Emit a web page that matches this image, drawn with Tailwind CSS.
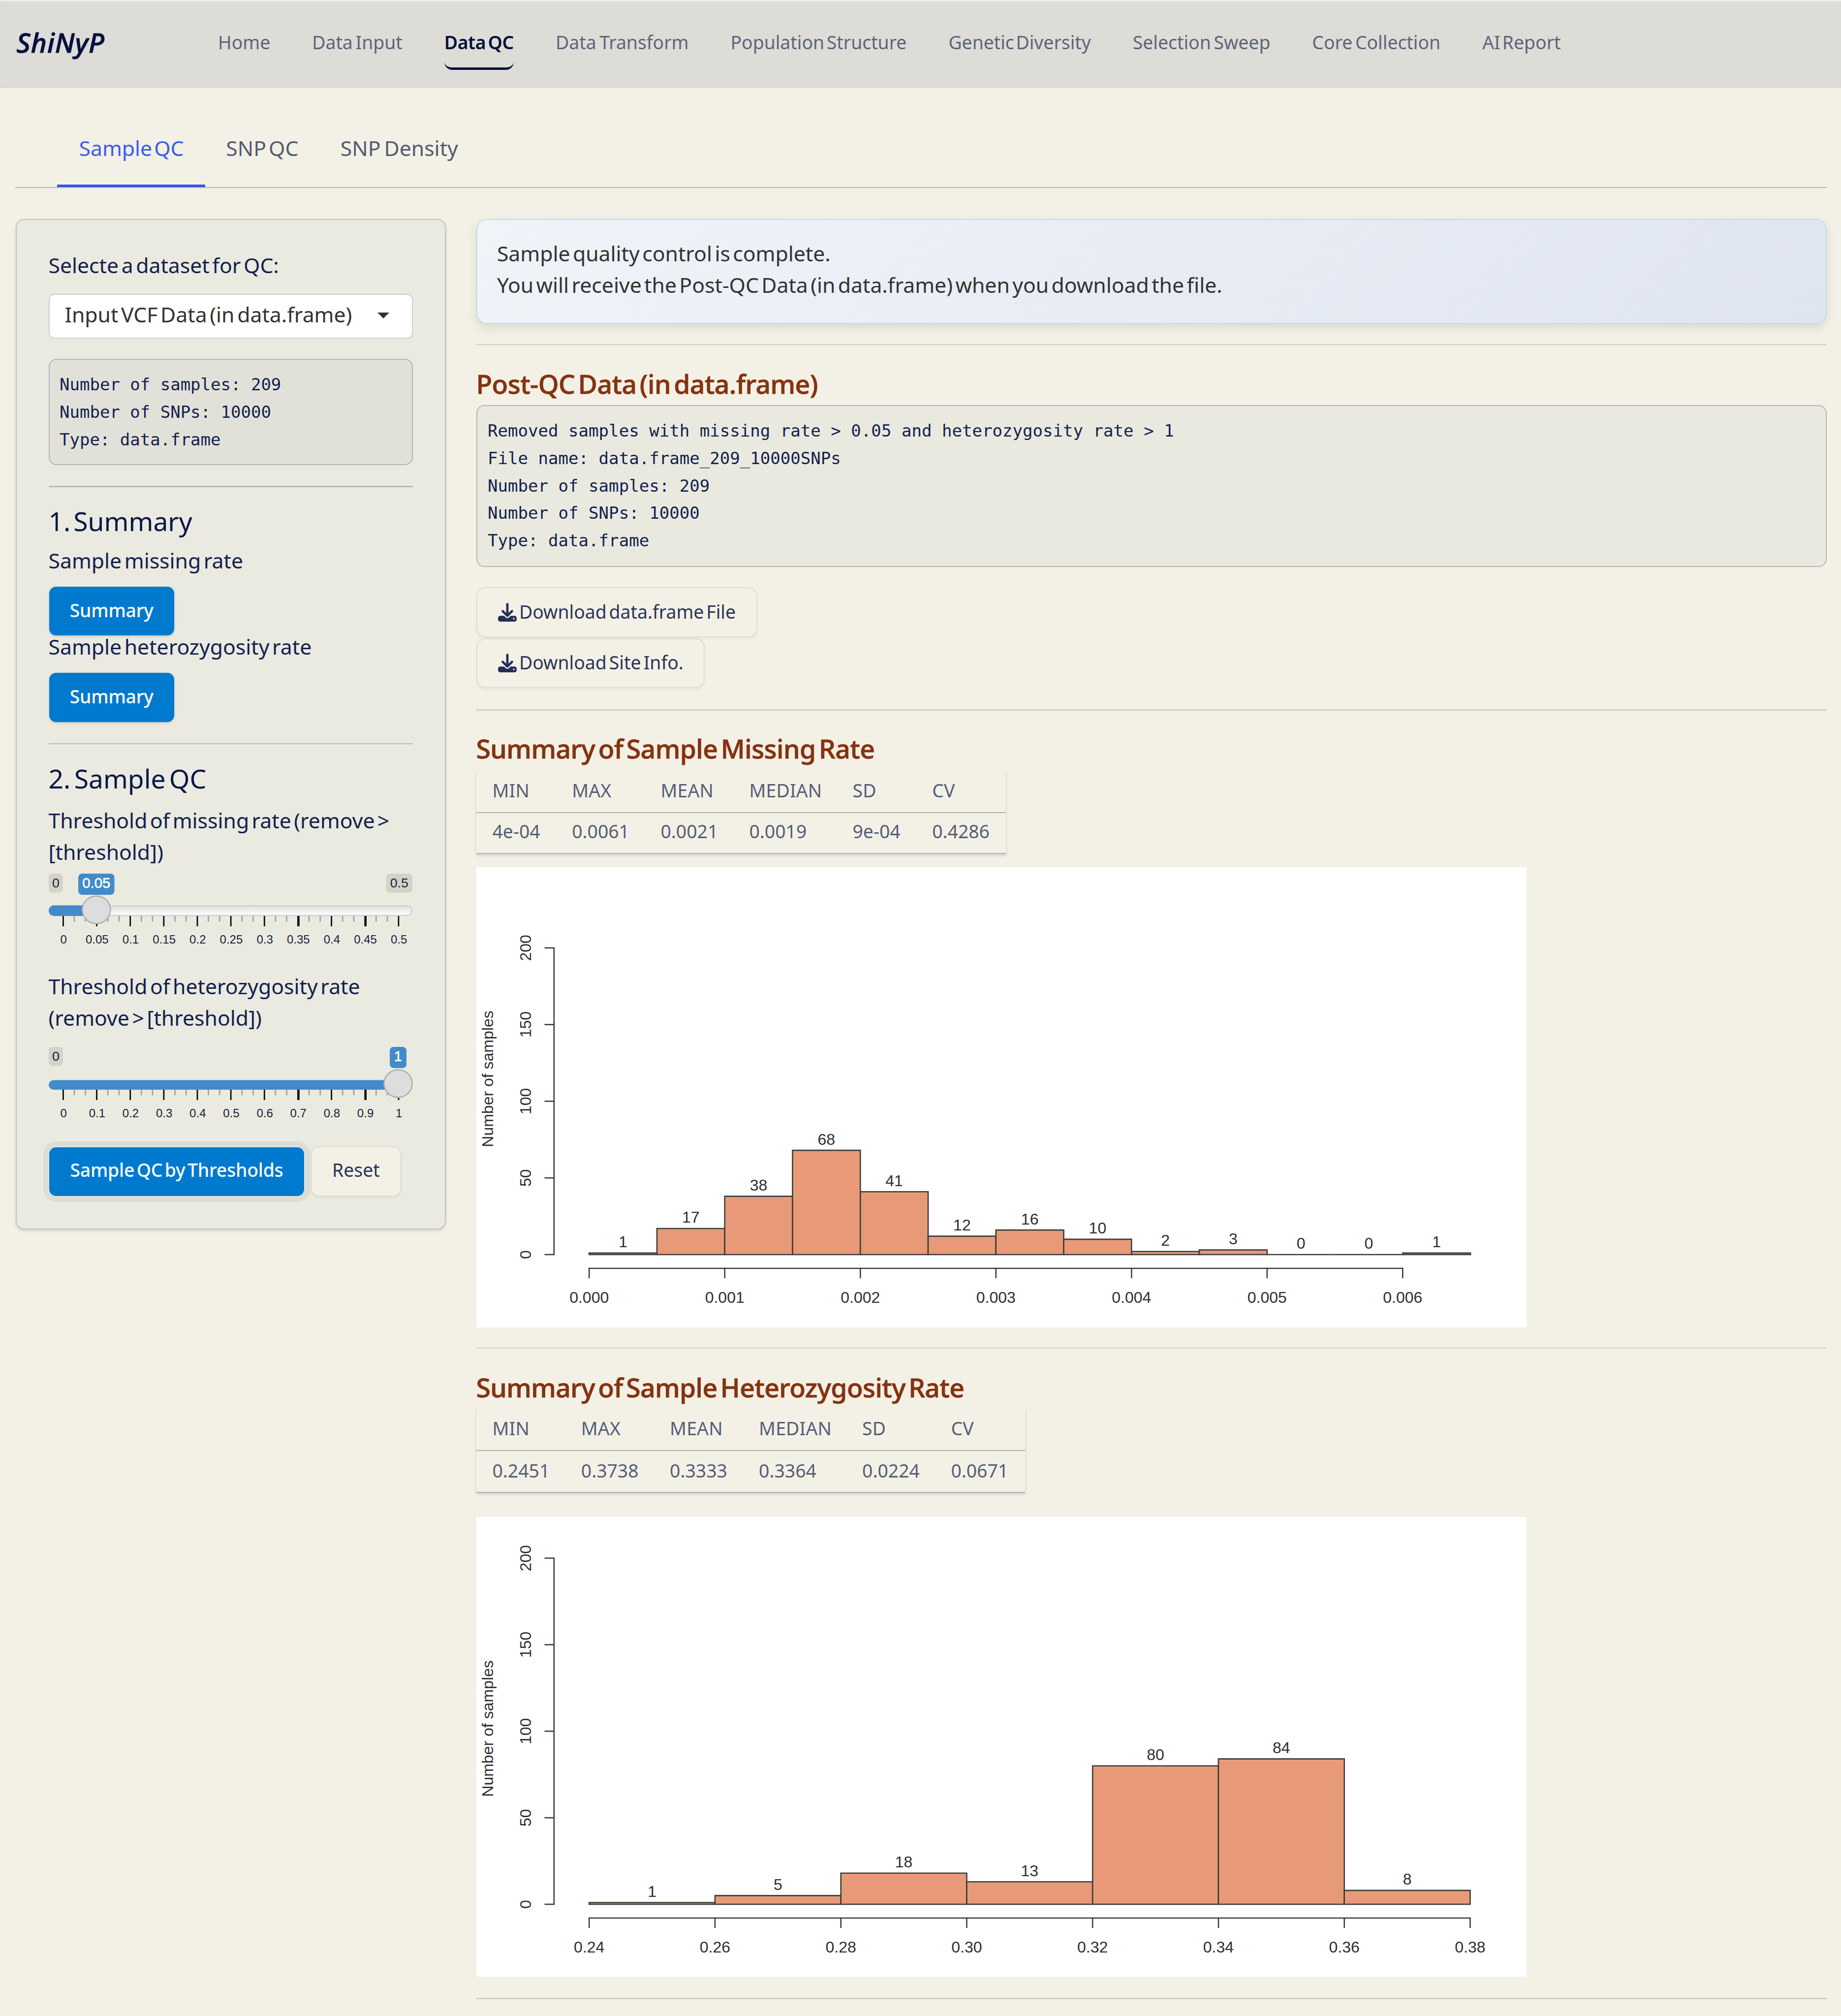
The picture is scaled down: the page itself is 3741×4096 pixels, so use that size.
<!DOCTYPE html>
<html lang="en">
<head>
<meta charset="utf-8">
<title>ShiNyP</title>
<script src="https://cdn.jsdelivr.net/npm/@tailwindcss/browser@4"></script>
</head>
<body class="w-[3741px] h-[4096px] overflow-hidden bg-[#f3f1e6] text-[#14214f] text-[42.7px] leading-[64px] font-['Noto_Sans',sans-serif]">

<header class="flex h-[179px] border-t-[3px] border-[#e8ebf1] bg-[#dddcd6] pl-[33.5px] shadow-[inset_0_-2px_2px_#d8d7d1]">
  <div class="mt-[50.5px] w-[409.5px] text-[55px] italic font-medium tracking-[1px] text-[#04103f] [-webkit-text-stroke:1px]">ShiNyP</div>
  <nav class="mt-[55px] flex items-start gap-[85px] text-[37.35px] leading-[56px] text-[#5d657b] whitespace-nowrap">
    <a>Home</a>
    <a class="[word-spacing:-4px]">Data Input</a>
    <a class="h-[84px] rounded-[16px] border-b-[5.3px] border-[#04103f] font-semibold tracking-[-0.4px] text-[#04103f] [word-spacing:-5px]">Data QC</a>
    <a class="[word-spacing:-3px]">Data Transform</a>
    <a class="[word-spacing:-5px]">Population Structure</a>
    <a class="[word-spacing:-6px]">Genetic Diversity</a>
    <a class="[word-spacing:-4px]">Selection Sweep</a>
    <a class="[word-spacing:-4px]">Core Collection</a>
    <a class="[word-spacing:-5.5px]">AI Report</a>
  </nav>
</header>

<main class="pl-[31px] pr-[29px]">
  <div class="flex pt-[90px] pl-[85px] border-b-[2.67px] border-[#b4b5b9] text-[#535b70] whitespace-nowrap">
    <a class="pl-[44.5px] pr-[43px] pb-[42px] border-b-[5.3px] border-[#2f55e8] text-[#3c5cec] [word-spacing:-7px]">Sample QC</a>
    <a class="px-[42.7px] [word-spacing:-6px]">SNP QC</a>
    <a class="px-[42.7px] [word-spacing:-4px]">SNP Density</a>
  </div>

  <div class="mt-[62.8px] flex items-start gap-[62px] pl-px">
    <aside class="h-[2053px] w-[873.5px] shrink-0 rounded-[17px] border-[2.67px] border-[#c4c5c1] bg-[#eaeae0] px-[64.5px] pt-[60.5px] shadow-[0_3px_6px_rgba(0,0,0,0.12)] whitespace-nowrap">
      <div class="[word-spacing:-5.5px]">Selecte a dataset for QC:</div>
      <div class="mt-[26px] flex h-[91px] items-center justify-between rounded-[11px] border-[2.67px] border-[#cfd0cc] bg-white pr-[46px] pb-[7px] pl-[31px] text-[#333333]">
        <span class="[word-spacing:-5.4px]">Input VCF Data (in data.frame)</span>
        <svg class="mt-[3px] h-[12px] w-[24px]" viewBox="0 0 24 12"><path d="M0 0h24L12 12z" fill="#333"/></svg>
      </div>
      <pre class="mt-[41px] h-[216px] rounded-[16px] border-[2.67px] border-[#b4b5b9] bg-[#e2e1d9] pt-[22px] pl-[20.5px] text-[34px] leading-[56px] font-['DejaVu_Sans_Mono',monospace]">Number of samples: 209
Number of SNPs: 10000
Type: data.frame</pre>
      <div class="mt-[42px] h-[2.67px] bg-[#b9babb]"></div>
      <div class="mt-[37px] text-[53.4px] text-[#0b1746] [word-spacing:-8px]">1. Summary</div>
      <div class="mt-[16px] [word-spacing:-5.5px]">Sample missing rate</div>
      <div class="mt-[21px] ml-[1.5px] flex h-[99.3px] w-[253.5px] items-center justify-center rounded-[14px] bg-[#007acf] pb-[4px] text-[37.35px] font-medium tracking-[-0.2px] text-white shadow-[0_2px_5px_rgba(0,0,0,0.15)]">Summary</div>
      <div class="-mt-[9.4px] [word-spacing:-5.5px]">Sample heterozygosity rate</div>
      <div class="mt-[21.6px] ml-[1.5px] flex h-[99.3px] w-[253.5px] items-center justify-center rounded-[14px] bg-[#007acf] pb-[4px] text-[37.35px] font-medium tracking-[-0.2px] text-white shadow-[0_2px_5px_rgba(0,0,0,0.15)]">Summary</div>
      <div class="mt-[43px] h-[2.67px] bg-[#b9babb]"></div>
      <div class="mt-[38px] text-[53.4px] text-[#0b1746] [word-spacing:-6.6px]">2. Sample QC</div>
      <div class="mt-[21px] [word-spacing:-5.7px]">Threshold of missing rate (remove &gt;<br>[threshold])</div>
      <svg id="s1" class="mt-[11.8px] block h-[160px] w-[739px] overflow-visible" viewBox="0 0 739 160"></svg>
      <div class="mt-[37px] [word-spacing:-5.5px]">Threshold of heterozygosity rate<br>(remove &gt; [threshold])</div>
      <svg id="s2" class="mt-[26.6px] block h-[160px] w-[739px] overflow-visible" viewBox="0 0 739 160"></svg>
      <div class="mt-[42.7px] ml-[1.5px] flex items-center gap-[13.6px] text-[37.35px]">
        <div class="flex h-[99px] w-[518px] items-center justify-center rounded-[14px] bg-[#007acf] pb-[6px] font-medium text-white shadow-[0_0_0_1.5px_#e9e9e2,0_0_0_12px_#dcddd6] tracking-[-0.2px] [word-spacing:-5px]">Sample QC by Thresholds</div>
        <div class="flex h-[101.5px] w-[183.5px] items-center justify-center rounded-[16px] border-[2.67px] border-[#dfded3] bg-[#f3f1e6] pb-[6px] text-[#2b3558] shadow-[0_3px_5px_rgba(0,0,0,0.05)]">Reset</div>
      </div>
    </aside>

    <section class="flex-1 whitespace-nowrap">
      <div class="h-[213px] rounded-[21px] border-[2.67px] border-[#cbd9e6] bg-linear-135 from-[#f0f4f9] to-[#dfe5f0] pt-[36.5px] pl-[40.4px] text-[#333333] shadow-[0_8px_20px_rgba(0,0,0,0.1)]">
        <div class="[word-spacing:-5.65px]">Sample quality control is complete.</div>
        <div class="[word-spacing:-5.7px]">You will receive the Post-QC Data (in data.frame) when you download the file.</div>
      </div>
      <div class="mt-[41px] h-[2.67px] bg-[#cfd0c9]"></div>
      <h2 class="mt-[47px] text-[53.4px] font-medium tracking-[-0.5px] text-[#853311] [word-spacing:-7px] [-webkit-text-stroke:0.9px]">Post-QC Data (in data.frame)</h2>
      <pre class="mt-[11px] h-[329px] rounded-[16px] border-[2.67px] border-[#b4b5b9] bg-[#e9e9df] pt-[22.5px] pl-[21.5px] text-[34px] leading-[55.8px] tracking-[0.04px] font-['DejaVu_Sans_Mono',monospace]">Removed samples with missing rate &gt; 0.05 and heterozygosity rate &gt; 1
File name: data.frame_209_10000SNPs
Number of samples: 209
Number of SNPs: 10000
Type: data.frame</pre>
      <div class="mt-[41px] flex h-[102px] w-[571.5px] items-center gap-[5px] rounded-[18px] border-[2.67px] border-[#dfded3] pb-[3px] pl-[42.5px] text-[37.35px] text-[#2b3558] shadow-[0_3px_5px_rgba(0,0,0,0.05)]">
        <svg class="mt-[2px] h-[38px] w-[38px]" viewBox="0 0 512 512" fill="#232e59"><path d="M288 32c0-17.7-14.3-32-32-32s-32 14.3-32 32V274.7l-73.4-73.4c-12.5-12.5-32.8-12.5-45.3 0s-12.5 32.8 0 45.3l128 128c12.5 12.5 32.8 12.5 45.3 0l128-128c12.5-12.5 12.5-32.8 0-45.3s-32.8-12.5-45.3 0L288 274.7V32zM64 352c-35.3 0-64 28.7-64 64v32c0 35.3 28.7 64 64 64H448c35.3 0 64-28.7 64-64V416c0-35.3-28.7-64-64-64H346.5l-45.3 45.3c-25 25-65.5 25-90.5 0L165.5 352H64zm368 56a24 24 0 1 1 0 48 24 24 0 1 1 0-48z"/></svg>
        <span class="[word-spacing:-4.7px]">Download data.frame File</span>
      </div>
      <div class="mt-[1.2px] flex h-[101px] w-[464px] items-center gap-[5px] rounded-[18px] border-[2.67px] border-[#dfded3] bg-[#f3f1e6] pb-[2px] pl-[42.5px] text-[37.35px] text-[#2b3558] shadow-[0_3px_5px_rgba(0,0,0,0.05)]">
        <svg class="mt-[2px] h-[38px] w-[38px]" viewBox="0 0 512 512" fill="#232e59"><path d="M288 32c0-17.7-14.3-32-32-32s-32 14.3-32 32V274.7l-73.4-73.4c-12.5-12.5-32.8-12.5-45.3 0s-12.5 32.8 0 45.3l128 128c12.5 12.5 32.8 12.5 45.3 0l128-128c12.5-12.5 12.5-32.8 0-45.3s-32.8-12.5-45.3 0L288 274.7V32zM64 352c-35.3 0-64 28.7-64 64v32c0 35.3 28.7 64 64 64H448c35.3 0 64-28.7 64-64V416c0-35.3-28.7-64-64-64H346.5l-45.3 45.3c-25 25-65.5 25-90.5 0L165.5 352H64zm368 56a24 24 0 1 1 0 48 24 24 0 1 1 0-48z"/></svg>
        <span class="[word-spacing:-4.5px]">Download Site Info.</span>
      </div>
      <div class="mt-[43.8px] h-[2.67px] bg-[#cfd0c9]"></div>
      <h2 class="mt-[44.5px] text-[53.4px] font-medium tracking-[-0.5px] text-[#853311] [word-spacing:-7px] [-webkit-text-stroke:0.9px]">Summary of Sample Missing Rate</h2>
      <div class="mt-[13.4px] w-[1076.5px] text-[37.35px] leading-[56px] text-[#565d78] shadow-[0_3px_6px_rgba(0,0,0,0.14)]">
        <div class="grid h-[85.6px] grid-cols-[161.7px_180.3px_180px_210px_161.7px_181px] border-b-[2.67px] border-[#b0b1b8] pt-[12.2px] *:pl-[33px] tracking-[0.2px]">
          <div>MIN</div><div>MAX</div><div>MEAN</div><div>MEDIAN</div><div>SD</div><div>CV</div>
        </div>
        <div class="grid h-[83.4px] grid-cols-[161.7px_180.3px_180px_210px_161.7px_181px] border-b-[2.67px] border-[#b0b1b8] pt-[9.5px] *:pl-[33px]">
          <div>4e-04</div><div>0.0061</div><div>0.0021</div><div>0.0019</div><div>9e-04</div><div>0.4286</div>
        </div>
      </div>
      <svg id="c1" class="mt-[27.2px] block h-[934.5px] w-[2134px] bg-white" viewBox="0 0 2134 934.5"></svg>
      <div class="mt-[41px] h-[2.67px] bg-[#cfd0c9]"></div>
      <h2 class="mt-[46.8px] text-[53.4px] font-medium tracking-[-0.55px] text-[#853311] [word-spacing:-7px] [-webkit-text-stroke:0.9px]">Summary of Sample Heterozygosity Rate</h2>
      <div class="mt-[11px] w-[1115px] text-[37.35px] leading-[56px] text-[#565d78] shadow-[0_3px_6px_rgba(0,0,0,0.14)]">
        <div class="grid h-[85.7px] grid-cols-[180.3px_180.3px_181px_210px_180.3px_181px] border-b-[2.67px] border-[#b0b1b8] pt-[12px] *:pl-[33px] tracking-[0.2px]">
          <div>MIN</div><div>MAX</div><div>MEAN</div><div>MEDIAN</div><div>SD</div><div>CV</div>
        </div>
        <div class="grid h-[85.3px] grid-cols-[180.3px_180.3px_181px_210px_180.3px_181px] border-b-[2.67px] border-[#b0b1b8] pt-[12px] *:pl-[33px]">
          <div>0.2451</div><div>0.3738</div><div>0.3333</div><div>0.3364</div><div>0.0224</div><div>0.0671</div>
        </div>
      </div>
      <svg id="c2" class="mt-[48.8px] block h-[934px] w-[2134px] bg-white" viewBox="0 0 2134 934"></svg>
      <div class="mt-[43.3px] h-[2.67px] bg-[#cfd0c9]"></div>
    </section>
  </div>
</main>

<script>
const F = 'font-family="Liberation Sans, Arial, sans-serif"';

// Histogram: counts per bin, pixels per sample, bin width, axis labels and their step
function histogram(id, counts, unit, binW, labels, step) {
  const y0 = 787, x0 = 229.2, line = 'stroke="#3c3c3c" stroke-width="2.6" fill="none"';
  let s = '';
  counts.forEach((n, i) => {
    const x = x0 + i * binW, h = n * unit;
    s += `<rect x="${x}" y="${y0 - h}" width="${binW}" height="${h}" fill="#e89a78"/>`;
    s += `<path d="M${x} ${y0}V${y0 - h}H${x + binW}V${y0}Z" ${line}/>`;
    s += `<text x="${x + binW / 2}" y="${y0 - h - 11.6}" text-anchor="middle">${n}</text>`;
  });
  s += `<path d="M157.8 ${y0}V${y0 - 200 * unit}" ${line}/>`;
  for (let v = 0; v <= 200; v += 50) {
    const y = y0 - v * unit;
    s += `<path d="M138.5 ${y}H159" ${line}/>`;
    s += `<text transform="translate(110.5 ${y}) rotate(-90)" text-anchor="middle">${v}</text>`;
  }
  s += `<path d="M${x0} 815H${x0 + (labels.length - 1) * step}" ${line}/>`;
  labels.forEach((t, i) => {
    const x = x0 + i * step;
    s += `<path d="M${x} 813.7V835" ${line}/><text x="${x}" y="884.7" text-anchor="middle">${t}</text>`;
  });
  s += `<text transform="translate(33.6 430) rotate(-90)" text-anchor="middle">Number of samples</text>`;
  document.getElementById(id).innerHTML = `<g ${F} font-size="32" fill="#2e2e2e">${s}</g>`;
}
histogram('c1', [1, 17, 38, 68, 41, 12, 16, 10, 2, 3, 0, 0, 1], 3.1155, 137.76,
  ['0.000', '0.001', '0.002', '0.003', '0.004', '0.005', '0.006'], 275.52);
histogram('c2', [1, 5, 18, 13, 80, 84, 8], 3.516, 255.75,
  ['0.24', '0.26', '0.28', '0.30', '0.32', '0.34', '0.36', '0.38'], 255.75);

// Range slider: track, handle (hx, hy) and value badge (val, bw)
function slider(id, labels, o) {
  const x0 = 29.2, step = 68.15, b = o.track + o.th;
  let s = `<defs><linearGradient id="g${id}" x2="0" y2="1"><stop stop-color="#dedede"/><stop offset="1" stop-color="#fff"/></linearGradient></defs>`;
  for (let i = 0; i <= 30; i++) {
    const x = x0 + i * step / 3;
    if (i % 3) s += `<rect x="${x - 1.3}" y="${b}" width="2.7" height="11.5" fill="#a3a39d"/>`;
    else s += `<rect x="${x - 1.2}" y="${b}" width="${i == 21 || i == 27 ? 4.6 : 2.8}" height="21" fill="#0a0a0a"/>`;
  }
  labels.forEach((t, i) => s += `<text x="${x0 + i * step + 1}" y="${o.base}" font-size="24" text-anchor="middle">${t}</text>`);
  s += `<rect x="1" y="${o.track + 1}" width="737" height="${o.th - 2}" rx="10" fill="url(#g${id})" stroke="#cccccc" stroke-width="2"/>`;
  s += `<path d="M${o.hx} ${o.track}H10.5a10.5 ${o.th / 2} 0 0 0 0 ${o.th}H${o.hx}z" fill="#428bca"/>`;
  s += `<rect width="29" height="38.5" y="0" rx="8" fill="#d3d3ca"/><text x="14.5" y="28" font-size="26.7" text-anchor="middle">0</text>`;
  if (o.max) s += `<rect x="685.5" width="53.5" height="38.5" rx="8" fill="#d3d3ca"/><text x="712.3" y="28" font-size="26.7" text-anchor="middle">${o.max}</text>`;
  s += `<rect x="${o.hx - o.bw / 2}" width="${o.bw}" height="43" rx="8" fill="#428bca"/><text x="${o.hx}" y="29" font-size="29.3" fill="#fff" stroke="#fff" stroke-width=".6" text-anchor="middle">${o.val}</text>`;
  s += `<ellipse cx="${o.hx}" cy="${o.hy}" rx="28.6" ry="28" fill="#dddddd" stroke="#adadad" stroke-width="2.4"/>`;
  document.getElementById(id).innerHTML = `<g ${F} fill="#1a1f3c">${s}</g>`;
}
slider('s1', ['0', '0.05', '0.1', '0.15', '0.2', '0.25', '0.3', '0.35', '0.4', '0.45', '0.5'],
  { track: 64.5, th: 21.5, base: 142, hx: 96.8, hy: 73.5, val: '0.05', bw: 73.5, max: '0.5' });
slider('s2', ['0', '0.1', '0.2', '0.3', '0.4', '0.5', '0.6', '0.7', '0.8', '0.9', '1'],
  { track: 67.5, th: 19.5, base: 142.5, hx: 710, hy: 74.5, val: '1', bw: 34 });
</script>
</body>
</html>
